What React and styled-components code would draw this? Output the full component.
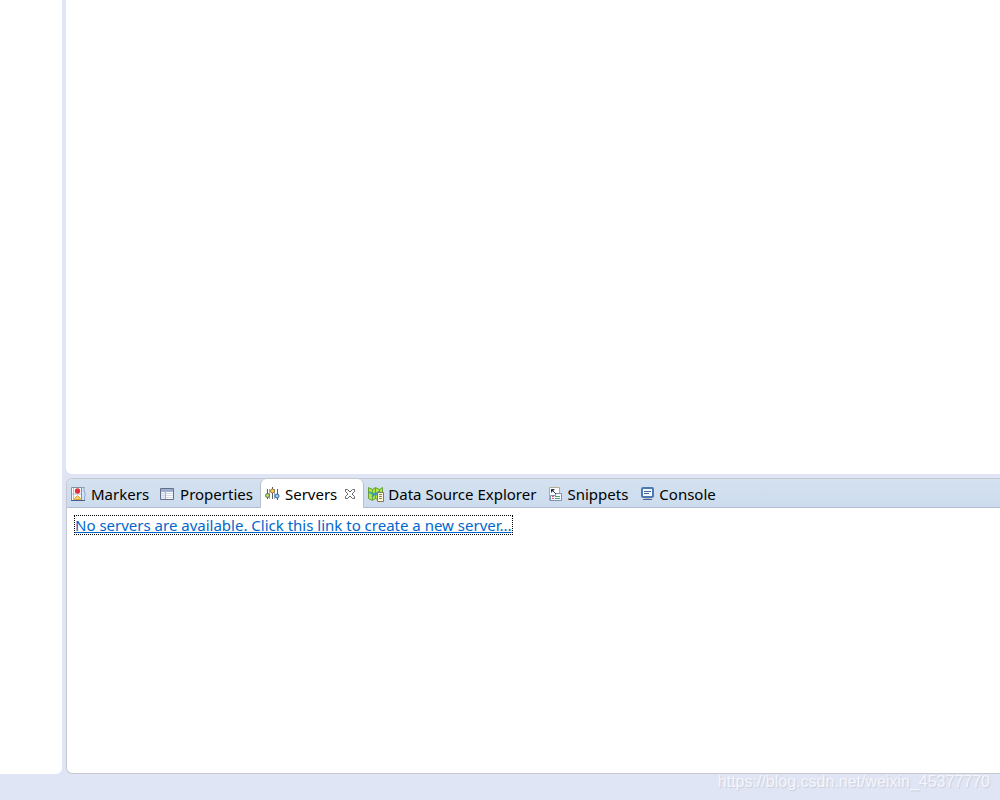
import styled, { createGlobalStyle, css } from 'styled-components';

const GlobalStyle = createGlobalStyle`
  * {
    box-sizing: border-box;
  }

  body {
    margin: 0;
    background: #e0e5f5;
    color: #000;
    font-family: 'Noto Sans', 'Open Sans', sans-serif;
    font-size: 15px;
  }
`

const Workbench = styled.div`
  display: grid;
  grid-template-columns: 62px 1fr;
  grid-template-rows: 1fr 26px;
  column-gap: 4px;
  height: 100vh;
  overflow: hidden;
`

const Sidebar = styled.aside`
  background: #fff;
  border-bottom-right-radius: 6px;
`

const Main = styled.main`
  display: grid;
  grid-template-rows: 1fr 296px;
  row-gap: 4px;
  min-width: 0;
`

const Editor = styled.section`
  background: #fff;
  border-bottom-left-radius: 6px;
`

const Views = styled.section`
  display: flex;
  flex-direction: column;
  background: #fff;
  border: 1px solid #c6c8ce;
  border-right: 0;
  border-radius: 6px 0 0 6px;
  overflow: hidden;
`

const TabBar = styled.div`
  display: flex;
  height: 29px;
  background: linear-gradient(#d3e1f0, #cddced);
  box-shadow: inset 0 -1px #b2bdd3;
`

const Tab = styled.button`
  display: flex;
  align-items: center;
  gap: 4px;
  padding: 0 7px 0 4px;
  border: 0;
  background: none;
  color: inherit;
  font: inherit;
  line-height: 20px;
  white-space: nowrap;

  ${({ $active }) => $active && css`
    background: #fff;
    border: solid #b8c0d0;
    border-width: 0 1px;
    border-radius: 6px 6px 0 0;
  `}
`

const Icon = styled.svg`
  flex: none;
  width: 16px;
  height: 16px;
`

const CloseIcon = styled.svg`
  flex: none;
  width: 12px;
  height: 12px;
  margin-left: 3px;
`

const Content = styled.div`
  flex: 1;
  padding: 7px;
`

const ServerLink = styled.a`
  display: block;
  width: fit-content;
  height: 20px;
  border: 1px dotted #000;
  color: #0066cc;
  line-height: 18px;
  text-decoration: underline;
  white-space: nowrap;
`

const StatusBar = styled.footer`
  grid-column: 1 / -1;
  padding-right: 10px;
  color: #f4f6fc;
  font: 16px/16px 'Liberation Sans', Arial, sans-serif;
  text-align: right;
  text-shadow: 1px 1px 1px #c8ccd9;
`

function MarkersIcon() {
  return (
    <Icon viewBox="0 0 16 16">
      <path d="M9 1.500h4.500c-2 3 2 6 0 9v4H9z" fill="#d4e4f5" stroke="#8da2c0" />
      <path d="M.5 1.500h10v13H.5z" fill="#fff" stroke="#8390a9" />
      <path d="M0 14.500h14" stroke="#3f608e" />
      <path d="M2.500 2v12M1 8h9" stroke="#a9bdd7" />
      <circle cx="6.500" cy="5" r="2.700" fill="#e52e3b" />
      <path d="M6.500 9.500l3 3v1h-6v-1z" fill="#ffcf55" stroke="#d7942c" strokeWidth=".8" />
    </Icon>
  )
}

function PropertiesIcon() {
  return (
    <Icon viewBox="0 0 16 16">
      <path d="M.5 2.500h13v11H.5z" fill="#fff" />
      <path d="M1 3h12v2H1z" fill="#9caed0" />
      <path d="M1 5h4v8H1z" fill="#e5edf8" />
      <path d="M1 7.500h12M1 9.500h12M1 11.500h12" stroke="#d2dceb" />
      <path d="M1 5.500h12M5.500 5v8" stroke="#a4b0c8" />
      <path d="M.5 2.500h13v11H.5z" fill="none" stroke="#646f88" />
    </Icon>
  )
}

function ServersIcon() {
  return (
    <Icon viewBox="0 0 16 16">
      <path d="M2.500 3v10M7.500 1v12M12.500 3v11" stroke="#545c70" />
      <path d="M4.500 3v10M9.500 3v10" stroke="#a1a8b8" />
      <circle cx="2.500" cy="9.500" r="2" fill="#bfd869" stroke="#55783e" />
      <circle cx="7.500" cy="5" r="2" fill="#ffd45e" stroke="#94752d" />
      <circle cx="12" cy="10" r="2" fill="#9bd0ee" stroke="#31679d" />
    </Icon>
  )
}

function DataSourceIcon() {
  return (
    <Icon viewBox="0 0 16 16">
      <path d="M.5 1.500l4 2 3-2 4 2 3-2v11l-3 2-4-2-3 2-4-2z" fill="#b5e343" stroke="#62a136" />
      <path d="M4.500 3v11M7.500 2v11M11.500 3v4" stroke="#67a636" />
      <path d="M1 6l4 2 4-1 3-2M4 11l3-3 3 1" fill="none" stroke="#399bb2" strokeWidth="1.500" />
      <path d="M9.500 6.500h6v9h-6z" fill="#fff9dc" stroke="#8b7851" />
      <path d="M11 8.500h3M11 10.500h3M11 12.500h3" stroke="#8f8265" />
    </Icon>
  )
}

function SnippetsIcon() {
  return (
    <Icon viewBox="0 0 16 16">
      <path d="M2.500 1.500h10v13h-10z" fill="#fff" stroke="#b2ae91" />
      <path d="M8.500 7.500h6v7h-11v-5h5z" fill="#f5f9ff" stroke="#7893b7" />
      <path d="M4 3h4L4 7z" fill="#223651" />
      <path d="M5 4l4 4" stroke="#223651" />
      <path d="M5 10.500h2M5 12.500h2" stroke="#d6625e" />
      <path d="M8 10.500h5M8 12.500h5" stroke="#55a271" />
    </Icon>
  )
}

function ConsoleIcon() {
  return (
    <Icon viewBox="0 0 16 16">
      <rect x="3" y="2" width="11" height="9" rx="1" fill="#f4f8ff" stroke="#4d78b6" strokeWidth="2" />
      <path d="M5 5.500h7M5 7.500h5" stroke="#456393" />
      <path d="M6 12h5v1H6z" fill="#c6b78f" />
      <path d="M4 13.500h9" stroke="#42669c" />
    </Icon>
  )
}

const tabs = [
  { name: 'Markers', Glyph: MarkersIcon },
  { name: 'Properties', Glyph: PropertiesIcon },
  { name: 'Servers', Glyph: ServersIcon, active: true },
  { name: 'Data Source Explorer', Glyph: DataSourceIcon },
  { name: 'Snippets', Glyph: SnippetsIcon },
  { name: 'Console', Glyph: ConsoleIcon },
]

export default function App() {
  return (
    <>
      <GlobalStyle />
      <Workbench>
        <Sidebar />
        <Main>
          <Editor />
          <Views>
            <TabBar role="tablist">
              {tabs.map(({ name, Glyph, active }) => (
                <Tab key={name} type="button" role="tab" aria-selected={!!active} $active={active}>
                  <Glyph />
                  {name}
                  {active && (
                    <CloseIcon viewBox="0 0 12 12">
                      <path
                        d="M1.500 1.500h2L6 4l2.500-2.500h2v2L8 6l2.500 2.500v2h-2L6 8l-2.500 2.500h-2v-2L4 6 1.500 3.500z"
                        fill="#fff"
                        stroke="#6b6b6b"
                      />
                    </CloseIcon>
                  )}
                </Tab>
              ))}
            </TabBar>
            <Content>
              <ServerLink href="#new-server">
                No servers are available. Click this link to create a new server...
              </ServerLink>
            </Content>
          </Views>
        </Main>
        <StatusBar>https://blog.csdn.net/weixin_45377770</StatusBar>
      </Workbench>
    </>
  )
}
